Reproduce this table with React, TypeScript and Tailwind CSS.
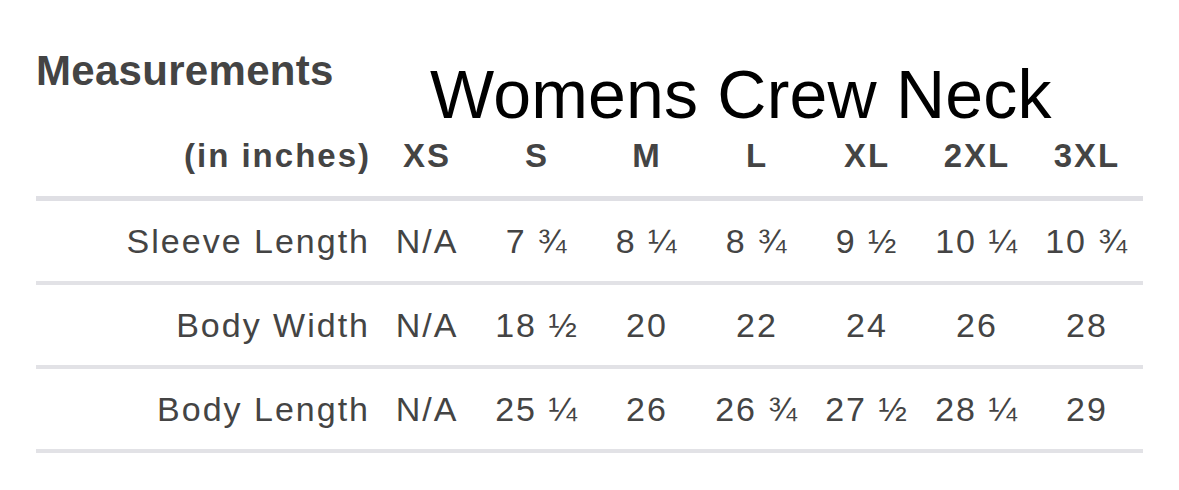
import React from "react";

const sizes = ["XS", "S", "M", "L", "XL", "2XL", "3XL"];
const rows: { label: string; values: string[] }[] = [
  { label: "Sleeve Length", values: ["N/A", "7 ¾", "8 ¼", "8 ¾", "9 ½", "10 ¼", "10 ¾"] },
  { label: "Body Width", values: ["N/A", "18 ½", "20", "22", "24", "26", "28"] },
  { label: "Body Length", values: ["N/A", "25 ¼", "26", "26 ¾", "27 ½", "28 ¼", "29"] },
];

export default function App() {
  return (
    <div
      className="w-[1179px] h-[490px] bg-white pl-[36px] overflow-hidden"
      style={{ fontFamily: '"Liberation Sans", Arial, sans-serif' }}
    >
      <div className="flex h-[139px]">
        <div className="w-[394px] pt-[50px] text-[42px] leading-none font-bold text-[#444444] tracking-[0.3px]">
          Measurements
        </div>
        <div className="pt-[60px] text-[68px] leading-none text-black tracking-[0.2px] whitespace-nowrap">
          Womens Crew Neck
        </div>
      </div>
      <div className="w-[1107px]">
        <div className="grid grid-cols-[335px_repeat(7,110px)] h-[62px] border-b-[5px] border-[#dfdfe4] text-[33px] leading-none font-bold text-[#444444] tracking-[2px]">
          <div className="text-right pr-[0px]">(in inches)</div>
          {sizes.map((s) => (
            <div key={s} className="text-center pl-[2px]">
              {s}
            </div>
          ))}
        </div>
        {rows.map((r) => (
          <div
            key={r.label}
            className="grid grid-cols-[335px_repeat(7,110px)] h-[84px] border-b-[4px] border-[#e2e2e6] items-center text-[34px] leading-none text-[#444444] tracking-[2px] whitespace-nowrap"
          >
            <div className="text-right pr-[1px]">{r.label}</div>
            {r.values.map((v, i) => (
              <div key={i} className="text-center pl-[2px]">
                {v}
              </div>
            ))}
          </div>
        ))}
      </div>
    </div>
  );
}
